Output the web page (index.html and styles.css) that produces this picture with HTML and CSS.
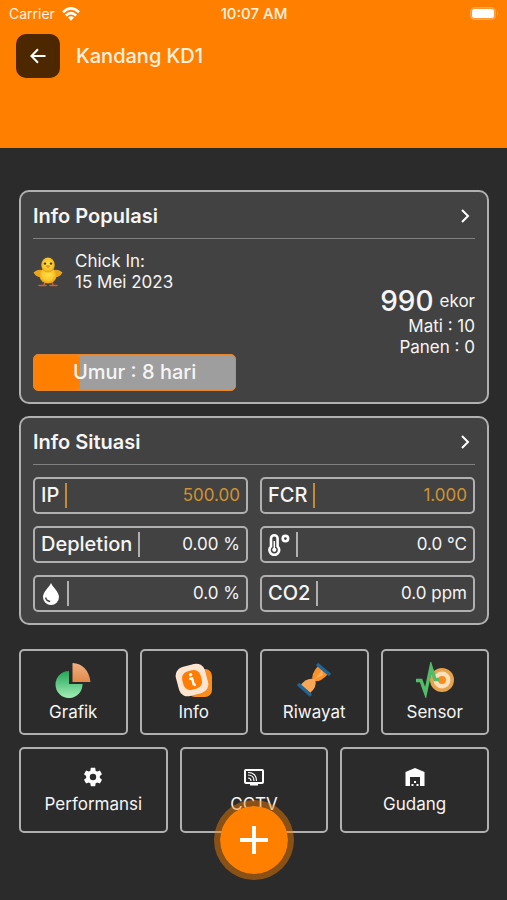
FILE: index.html
```
<!DOCTYPE html>
<html lang="id">
  <head>
    <meta charset="UTF-8" />
    <meta name="viewport" content="width=device-width, initial-scale=1.0" />
    <title>Kandang KD1</title>
    <link rel="stylesheet" href="styles.css">
  </head>
  <body>
    <header class="header">
      <div class="status-bar">
        <span class="carrier">
          Carrier
          <svg width="18" height="14" viewBox="0 0 18 14" fill="none" stroke="#fff" stroke-width="2.6">
            <path d="M1 5.2Q9-2.6 17 5.2M3.9 8.6Q9 3.6 14.1 8.6" />
            <path d="M6 10.6Q9 8 12 10.600L9 13.800Z" fill="#fff" stroke="none" />
          </svg>
        </span>
        <span class="clock">10:07 AM</span>
        <span class="battery">
          <svg width="29" height="13" viewBox="0 0 29 13">
            <rect x=".5" y=".5" width="25" height="12" rx="4" fill="#ff9833" stroke="#ffa850" />
            <rect x="2" y="2" width="22" height="9" rx="2.5" fill="#fff" />
            <path d="M27 4.5Q29 6.5 27 8.5Z" fill="#ffb36a" />
          </svg>
        </span>
      </div>
      <div class="title-bar">
        <button class="back" aria-label="Kembali">
          <svg width="16" height="16" viewBox="0 0 16 16" fill="none" stroke="#fff" stroke-width="2">
            <path d="M15.5 8H2M8 1.2L1.4 8L8 14.8" />
          </svg>
        </button>
        <h1>Kandang KD1</h1>
      </div>
    </header>

    <main class="content">
      <section class="card">
        <a class="card-header" href="#">
          <h2>Info Populasi</h2>
          <svg class="chevron" width="20" height="20" viewBox="0 0 20 20"><path d="M7 4l6 6-6 6" /></svg>
        </a>
        <div class="population">
          <div class="age">
            <div class="chick-in">
              <svg width="30" height="30" viewBox="0 0 30 30">
                <defs>
                  <radialGradient id="chick" cx=".5" cy=".45" r=".6">
                    <stop offset="0" stop-color="#ffe14a" />
                    <stop offset=".6" stop-color="#fbc62a" />
                    <stop offset="1" stop-color="#dc9412" />
                  </radialGradient>
                </defs>
                <path d="M12 25l-1 2.5M19 25l1 2.5M6 28.500h7M17 28.500h7" stroke="#c8622a" stroke-width="1.6" stroke-linecap="round" />
                <path d="M9 13Q4 12 .5 15.500Q3 20 8 20.5ZM21 13Q26 12 29.500 15.500Q27 20 22 20.5Z" fill="#eba51c" />
                <ellipse cx="15" cy="18.500" rx="8.500" ry="8" fill="url(#chick)" />
                <ellipse cx="15" cy="8" rx="6.8" ry="7.500" fill="url(#chick)" />
                <circle cx="12" cy="6.6" r="1.2" fill="#4a3512" />
                <circle cx="18" cy="6.6" r="1.2" fill="#4a3512" />
                <path d="M12.6 8.8Q15 7.4 17.4 8.8L15 11.4Z" fill="#e8971d" />
              </svg>
              <p>Chick In:<br>15 Mei 2023</p>
            </div>
            <div class="progress" role="progressbar" aria-valuenow="8" aria-valuemin="0" aria-valuemax="35">
              <div class="progress-fill" style="width: 23%"></div>
              <span class="progress-label">Umur : 8 hari</span>
            </div>
          </div>
          <div class="count">
            <p class="total"><strong>990</strong> ekor</p>
            <p>Mati : 10</p>
            <p>Panen : 0</p>
          </div>
        </div>
      </section>

      <section class="card">
        <a class="card-header" href="#">
          <h2>Info Situasi</h2>
          <svg class="chevron" width="20" height="20" viewBox="0 0 20 20"><path d="M7 4l6 6-6 6" /></svg>
        </a>
        <dl class="metrics">
          <div class="metric warning"><dt>IP</dt><dd>500.00</dd></div>
          <div class="metric warning"><dt>FCR</dt><dd>1.000</dd></div>
          <div class="metric"><dt>Depletion</dt><dd>0.00 %</dd></div>
          <div class="metric">
            <dt>
              <svg width="22" height="22" viewBox="0 0 22 22" fill="none" stroke="#fff" role="img" aria-label="Suhu">
                <path d="M3 12.400V4.600a3.300 3.300 0 0 1 6.600 0v7.800a4.900 4.900 0 1 1-6.600 0Z" stroke-width="2.6" />
                <path d="M6.300 7v7" stroke-width="1.5" />
                <circle cx="6.300" cy="15.8" r="2.100" fill="#fff" stroke="none" />
                <circle cx="17.400" cy="4.600" r="2.700" stroke-width="2.600" />
              </svg>
            </dt>
            <dd>0.0 °C</dd>
          </div>
          <div class="metric">
            <dt>
              <svg width="20" height="22" viewBox="0 0 20 22" role="img" aria-label="Kelembapan">
                <path d="M10 0C12 4.500 18 9 18 14a8 8 0 0 1-16 0C2 9 8 4.500 10 0Z" fill="#fff" />
                <path d="M4.600 14.500q.8 3.600 4.600 4" fill="none" stroke="#424242" stroke-width="1.400" />
              </svg>
            </dt>
            <dd>0.0 %</dd>
          </div>
          <div class="metric"><dt>CO2</dt><dd>0.0 ppm</dd></div>
        </dl>
      </section>

      <nav class="menu">
        <div class="menu-row">
          <button class="tile">
            <svg width="36" height="36" viewBox="0 0 36 36">
              <defs>
                <linearGradient id="pie" x1="0" y1="0" x2="0" y2="1">
                  <stop offset="0" stop-color="#22a557" />
                  <stop offset="1" stop-color="#a4eeb6" />
                </linearGradient>
                <linearGradient id="slice" x1="0" y1="0" x2="0" y2="1">
                  <stop offset="0" stop-color="#f3b080" />
                  <stop offset="1" stop-color="#e08a4c" />
                </linearGradient>
              </defs>
              <path d="M14 9V22H27.500A13.500 13.500 0 1 1 14 9Z" fill="url(#pie)" />
              <path d="M17.500 1Q33 2 35.500 20H17.500Z" fill="url(#slice)" />
            </svg>
            <span>Grafik</span>
          </button>
          <button class="tile">
            <svg width="38" height="36" viewBox="0 0 38 36">
              <rect x="13" y="7" width="24" height="28" rx="7" fill="#fb8c1e" />
              <g transform="rotate(-15 17 18)">
                <rect x="2" y="3" width="30" height="30" rx="9" fill="#fde5d2" />
                <rect x="7.500" y="8.500" width="19" height="19" rx="7" fill="#ff7d05" />
                <circle cx="17" cy="12.500" r="1.700" fill="#fff" />
                <path d="M14.500 16.500h3v7M17.500 23.500h2" fill="none" stroke="#fff" stroke-width="2.400" />
              </g>
            </svg>
            <span>Info</span>
          </button>
          <button class="tile">
            <svg width="36" height="36" viewBox="0 0 36 36">
              <path d="M22 4Q14 13 17 19Q24 21 32 12Z" fill="#fb9129" />
              <path d="M19 17Q10 15 4 24L13 32Q22 25 19 17Z" fill="#f8a757" />
              <path d="M21 2L34 13M2 22L15 33.500" stroke="#1f6698" stroke-width="3.500" />
              <path d="M19 17l7-9 1 5Z" fill="#ffae5a" />
            </svg>
            <span>Riwayat</span>
          </button>
          <button class="tile">
            <svg width="40" height="36" viewBox="0 0 40 36">
              <circle cx="27" cy="18" r="12" fill="#e6a34b" />
              <circle cx="27" cy="18" r="8.500" fill="#ffe0bd" />
              <circle cx="27" cy="18" r="4" fill="#ff8a1c" />
              <path d="M1 18.500H6L10.500 31L16 5L20 17.500H24" fill="none" stroke="#52bd68" stroke-width="3.400" />
            </svg>
            <span>Sensor</span>
          </button>
        </div>
        <div class="menu-row">
          <button class="tile small">
            <svg width="22" height="22" viewBox="0 0 24 24" fill="#fff">
              <path d="M19.430 12.980c.04-.32.07-.64.07-.98s-.03-.66-.07-.98l2.110-1.650c.19-.15.24-.42.12-.64l-2-3.460c-.12-.22-.39-.3-.61-.22l-2.490 1c-.52-.4-1.080-.73-1.690-.98l-.38-2.650C14.460 2.180 14.250 2 14 2h-4c-.25 0-.46.18-.49.42l-.38 2.650c-.61.25-1.170.59-1.690.98l-2.490-1c-.23-.09-.49 0-.61.22l-2 3.460c-.13.22-.07.49.12.64l2.110 1.650c-.04.32-.07.65-.07.98s.03.66.07.98l-2.110 1.650c-.19.15-.24.42-.12.64l2 3.460c.12.22.39.3.61.22l2.490-1c.52.4 1.080.73 1.690.98l.38 2.650c.03.24.24.42.49.42h4c.25 0 .46-.18.49-.42l.38-2.650c.61-.25 1.170-.59 1.690-.98l2.490 1c.23.09.49 0 .61-.22l2-3.460c.12-.22.07-.49-.12-.64zM12 15.500a3.500 3.500 0 1 1 0-7 3.500 3.500 0 0 1 0 7z" />
            </svg>
            <span>Performansi</span>
          </button>
          <button class="tile small">
            <svg width="22" height="22" viewBox="0 0 22 22" fill="none" stroke="#fff" stroke-width="2">
              <rect x="2" y="4" width="18" height="13" rx="1" />
              <path d="M7 18.500h8" />
              <path d="M5 9q6 0 6 6M5 12q3 0 3 3M5 6.500q8.500 0 8.500 8.500" stroke-width="1.200" />
            </svg>
            <span>CCTV</span>
          </button>
          <button class="tile small">
            <svg width="22" height="22" viewBox="0 0 22 22" fill="#fff">
              <path d="M1.500 20V6L11 2l9.500 4v14H16v-9H6v9Z" />
              <path d="M7.500 18h2v2h-2zM12.500 18h2v2h-2zM10 15h2v2h-2z" />
            </svg>
            <span>Gudang</span>
          </button>
        </div>
      </nav>
    </main>

    <button class="fab" aria-label="Tambah">
      <svg width="28" height="28" viewBox="0 0 28 28" stroke="#fff" stroke-width="4"><path d="M14 0V28M0 14H28" /></svg>
    </button>
  </body>
</html>
```
FILE: styles.css
```
* {
  box-sizing: border-box;
}

body {
  margin: 0;
  min-height: 100vh;
  background-color: #2b2b2b;
  color: #f5f5f5;
  font-family: Inter, "Liberation Sans", sans-serif;
  font-size: 17px;
  line-height: 21px;
}
h1,
h2,
p,
dl,
dd {
  margin: 0;
}
button {
  border: none;
  padding: 0;
  color: inherit;
  font: inherit;
  cursor: pointer;
}
svg {
  display: block;
}

.header {
  height: 148px;
  background-color: #ff8000;
}
.status-bar {
  display: grid;
  grid-template-columns: 1fr auto 1fr;
  align-items: center;
  height: 27px;
  padding: 0 8px 0 9px;
  font-size: 14px;
  color: #fff2e0;
}
.carrier {
  display: flex;
  align-items: center;
  gap: 7px;
}
.clock {
  font-size: 15px;
  font-weight: 500;
}
.battery {
  justify-self: end;
}
.title-bar {
  display: flex;
  align-items: center;
  gap: 16px;
  padding: 7px 16px;
}
.back {
  display: grid;
  place-items: center;
  width: 44px;
  height: 44px;
  border-radius: 10px;
  background-color: #4d2700;
}
h1 {
  font-size: 20px;
  font-weight: 500;
  color: #fff2e0;
}

.content {
  display: flex;
  flex-direction: column;
  gap: 12px;
  padding: 42px 18px 66px 19px;
}
.card {
  padding: 12px 12px 11px;
  border: 2px solid #b0b0b0;
  border-radius: 10px;
  background-color: #424242;
}
.card-header {
  display: flex;
  justify-content: space-between;
  align-items: center;
  padding-bottom: 10px;
  border-bottom: 1px solid #808080;
  color: inherit;
  text-decoration: none;
}
h2 {
  font-size: 20px;
  line-height: 24px;
  font-weight: 600;
}
.chevron {
  fill: none;
  stroke: #fff;
  stroke-width: 2;
}

.population {
  display: flex;
  justify-content: space-between;
  padding-top: 12px;
}
.age {
  display: flex;
  flex-direction: column;
  gap: 61px;
  width: 46%;
}
.chick-in {
  display: flex;
  align-items: center;
  gap: 12px;
}
.progress {
  position: relative;
  height: 37px;
  border: 1px solid #e8842a;
  border-radius: 5px;
  background-color: #9e9e9e;
  overflow: hidden;
}
.progress-fill {
  height: 100%;
  border-radius: 0 4px 4px 0;
  background-color: #ff8000;
}
.progress-label {
  position: absolute;
  inset: 0;
  display: grid;
  place-items: center;
  font-size: 20px;
  font-weight: 500;
}
.count {
  align-self: flex-end;
  padding-bottom: 33px;
  text-align: right;
}
.total {
  display: flex;
  align-items: center;
  justify-content: flex-end;
  gap: 6px;
  line-height: 30px;
}
.total strong {
  font-size: 28px;
  font-weight: 500;
}

.metrics {
  display: grid;
  grid-template-columns: 1fr 1fr;
  gap: 12px;
  padding-top: 12px;
}
.metric {
  display: flex;
  justify-content: space-between;
  align-items: center;
  height: 37px;
  padding: 0 6px;
  border: 2px solid #b0b0b0;
  border-radius: 5px;
}
.metric dt {
  display: flex;
  align-items: center;
  height: 25px;
  padding-right: 6px;
  border-right: 2px solid #b0b0b0;
  font-size: 20px;
  font-weight: 500;
}
.metric.warning dt {
  border-color: #c58a34;
}
.metric.warning dd {
  color: #d0932f;
}

.menu {
  display: flex;
  flex-direction: column;
  gap: 12px;
  padding-top: 12px;
}
.menu-row {
  display: flex;
  gap: 12px;
}
.tile {
  display: flex;
  flex: 1;
  flex-direction: column;
  align-items: center;
  justify-content: center;
  gap: 4px;
  height: 86px;
  border: 2px solid #b0b0b0;
  border-radius: 5px;
  background-color: transparent;
}
.tile.small {
  gap: 6px;
}

/* floating add button over the menu */
.fab {
  position: fixed;
  bottom: 20px;
  left: 50%;
  display: grid;
  place-items: center;
  width: 80px;
  height: 80px;
  border: 6px solid rgba(255, 128, 0, 0.45);
  border-radius: 50%;
  background-color: #ff8000;
  background-clip: padding-box;
  transform: translateX(-50%);
}
```
